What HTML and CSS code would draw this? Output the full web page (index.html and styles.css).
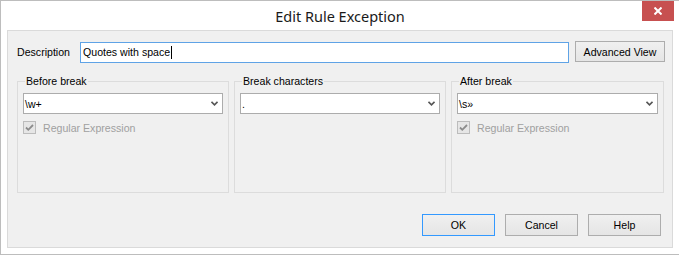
FILE: index.html
```html
<!DOCTYPE html>
<html>
<head>
<meta charset="utf-8">
<link rel="stylesheet" href="styles.css">
</head>
<body>
<div class="window">
  <div class="titlebar">
    <span></span>
    <div class="title">Edit Rule Exception</div>
    <div class="close-wrap">
      <div class="close">
        <svg width="8" height="8" viewBox="0 0 8 8"><path d="M0.5 0.5 L7.5 7.5 M7.5 0.5 L0.5 7.5" stroke="#fff" stroke-width="2" fill="none"/></svg>
      </div>
    </div>
  </div>
  <div class="client">
    <div class="desc-row">
      <label class="desc-label">Description</label>
      <div class="textbox"><span>Quotes with space</span><span class="caret"></span></div>
      <div class="btn adv">Advanced View</div>
    </div>
    <div class="groups">
      <fieldset class="group">
        <legend>Before break</legend>
        <div class="combo"><span class="val">\w+</span>
          <svg class="chev" width="7" height="5" viewBox="0 0 7 5"><path d="M0.5 0.8 L3.5 3.8 L6.5 0.8" stroke="#555" stroke-width="1.6" fill="none"/></svg>
        </div>
        <div class="check">
          <span class="box"><svg width="11" height="11" viewBox="0 0 11 11"><path d="M2 5.5 L4.3 7.8 L9 3" stroke="#8c8c8c" stroke-width="1.8" fill="none"/></svg></span>
          <span class="check-label">Regular Expression</span>
        </div>
      </fieldset>
      <fieldset class="group">
        <legend>Break characters</legend>
        <div class="combo"><span class="val">.</span>
          <svg class="chev" width="7" height="5" viewBox="0 0 7 5"><path d="M0.5 0.8 L3.5 3.8 L6.5 0.8" stroke="#555" stroke-width="1.6" fill="none"/></svg>
        </div>
      </fieldset>
      <fieldset class="group">
        <legend>After break</legend>
        <div class="combo"><span class="val">\s»</span>
          <svg class="chev" width="7" height="5" viewBox="0 0 7 5"><path d="M0.5 0.8 L3.5 3.8 L6.5 0.8" stroke="#555" stroke-width="1.6" fill="none"/></svg>
        </div>
        <div class="check">
          <span class="box"><svg width="11" height="11" viewBox="0 0 11 11"><path d="M2 5.5 L4.3 7.8 L9 3" stroke="#8c8c8c" stroke-width="1.8" fill="none"/></svg></span>
          <span class="check-label">Regular Expression</span>
        </div>
      </fieldset>
    </div>
    <div class="actions">
      <div class="btn default">OK</div>
      <div class="btn">Cancel</div>
      <div class="btn">Help</div>
    </div>
  </div>
</div>
</body>
</html>
```
FILE: styles.css
```css
html, body {
  margin: 0;
  padding: 0;
  background: #ffffff;
}
body {
  font-family: "Liberation Sans", Arial, sans-serif;
  font-size: 10.6px;
  color: #000;
}
.window {
  width: 679px;
  height: 255px;
  box-sizing: border-box;
  border: 1px solid #bdbdbd;
  border-right: none;
  background: #fff;
  padding: 0 6px 6px 6px;
}
.titlebar {
  height: 29px;
  margin: 0 -6px;
  display: grid;
  grid-template-columns: 1fr auto 1fr;
  align-items: start;
}
.title {
  font-family: "Noto Sans", "Open Sans", sans-serif;
  font-size: 14.5px;
  color: #1a1a1a;
  line-height: 20px;
  padding-top: 5px;
}
.close-wrap {
  display: flex;
  justify-content: flex-end;
  padding-right: 5px;
}
.close {
  width: 32px;
  height: 20px;
  background: #c75050;
  display: flex;
  align-items: center;
  justify-content: center;
}
.client {
  height: 218px;
  box-sizing: border-box;
  border: 1px solid #dadada;
  background: #f0f0f0;
  display: flex;
  flex-direction: column;
}
.desc-row {
  display: flex;
  align-items: flex-start;
  height: 21px;
  margin-top: 10px;
  padding-left: 9px;
}
.desc-label {
  width: 63px;
  line-height: 21px;
  margin-top: 1px;
}
.textbox {
  width: 489px;
  height: 21px;
  box-sizing: border-box;
  margin-top: 1px;
  border: 1px solid #5fa3e6;
  background: #fff;
  padding: 0 2px;
  line-height: 19px;
  display: flex;
  align-items: center;
}
.caret {
  display: inline-block;
  width: 1px;
  height: 13px;
  background: #000;
  margin-left: 1px;
}
.btn {
  height: 22px;
  box-sizing: border-box;
  border: 1px solid #adadad;
  background: linear-gradient(#f0f0f0, #e5e5e5);
  display: flex;
  align-items: center;
  justify-content: center;
  line-height: 20px;
}
.adv {
  width: 90px;
  height: 21px;
  margin-left: 6px;
}
.groups {
  display: grid;
  grid-template-columns: 212px 212px 213px;
  column-gap: 5px;
  margin: 13px 8px 0 9px;
}
.group {
  margin: 0;
  border: 1px solid #dcdcdc;
  padding: 5px 5px 0 5px;
  height: 118px;
  box-sizing: border-box;
  min-width: 0;
}
.group legend {
  margin-left: 2px;
  padding: 0 1px;
  line-height: 13px;
}
.combo {
  height: 21px;
  box-sizing: border-box;
  border: 1px solid #acacac;
  background: #fff;
  display: flex;
  align-items: center;
  padding: 0 4px 0 1px;
}
.combo .val {
  flex: 1;
}
.chev {
  display: block;
}
.check {
  display: flex;
  align-items: center;
  margin-top: 7px;
  height: 13px;
}
.box {
  width: 13px;
  height: 13px;
  box-sizing: border-box;
  border: 1px solid #bcbcbc;
  background: #e6e6e6;
  display: flex;
  align-items: center;
  justify-content: center;
}
.check-label {
  margin-left: 7px;
  color: #a0a0a0;
}
.actions {
  display: flex;
  justify-content: flex-end;
  gap: 10px;
  margin-top: 21px;
  padding-right: 11px;
}
.actions .btn {
  width: 73px;
}
.btn.default {
  border-color: #3399ff;
}
```
